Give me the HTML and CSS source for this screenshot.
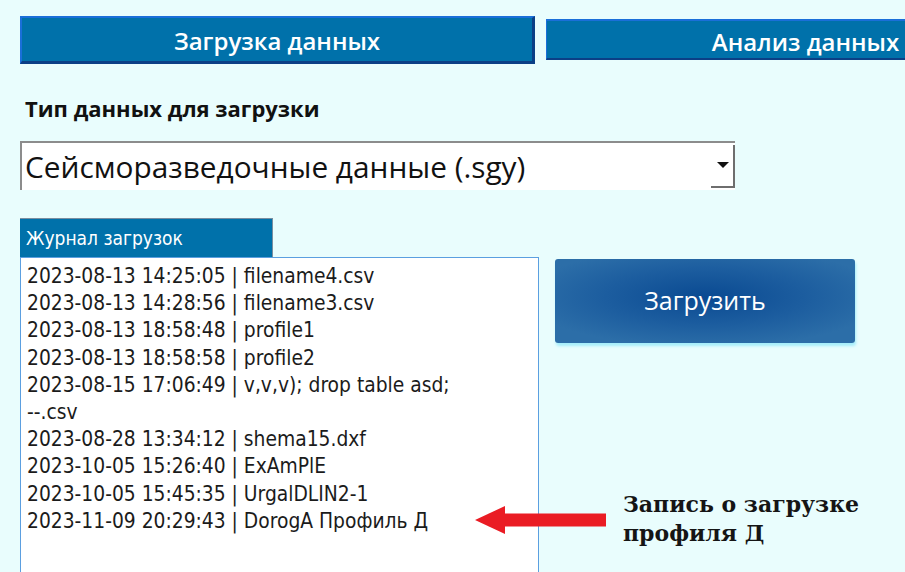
FILE: index.html
```html
<!DOCTYPE html>
<html lang="ru">
<head>
<meta charset="utf-8">
<title>Загрузка данных</title>
<link rel="stylesheet" href="styles.css">
</head>
<body>
<div class="page">
  <nav class="tabs">
    <div class="tab tab-active">Загрузка данных</div>
    <div class="tab tab-idle">Анализ данных</div>
  </nav>

  <div class="field-label">Тип данных для загрузки</div>

  <div class="select">
    <span class="select-value">Сейсморазведочные данные (.sgy)</span>
    <span class="select-btn"><span class="caret"></span></span>
  </div>

  <section class="lower">
    <div class="journal">
      <div class="journal-tab">Журнал загрузок</div>
      <div class="journal-list">
        <div class="row">2023-08-13 14:25:05 | filename4.csv</div>
        <div class="row">2023-08-13 14:28:56 | filename3.csv</div>
        <div class="row">2023-08-13 18:58:48 | profile1</div>
        <div class="row">2023-08-13 18:58:58 | profile2</div>
        <div class="row">2023-08-15 17:06:49 | v,v,v); drop table asd;<br>--.csv</div>
        <div class="row">2023-08-28 13:34:12 | shema15.dxf</div>
        <div class="row">2023-10-05 15:26:40 | ExAmPlE</div>
        <div class="row">2023-10-05 15:45:35 | UrgalDLIN2-1</div>
        <div class="row">2023-11-09 20:29:43 | DorogA Профиль Д</div>
      </div>
    </div>
    <div class="actions">
      <button class="upload-btn" type="button">Загрузить</button>
    </div>
  </section>

  <svg class="callout-arrow" width="132" height="30" viewBox="0 0 132 30">
    <polygon points="0,15 30,1 30,8.5 131,8.5 131,21.5 30,21.5 30,29" fill="#ea1c24"/>
  </svg>
  <div class="callout-text">Запись о загрузке<br>профиля Д</div>
</div>
</body>
</html>
```

FILE: styles.css
```css
html, body {
  margin: 0;
  padding: 0;
}

body {
  background: #e9fdfd;
  width: 905px;
  height: 572px;
  overflow: hidden;
}

.page {
  position: relative;
  width: 905px;
  height: 572px;
  overflow: hidden;
  padding-left: 20px;
  box-sizing: border-box;
}

/* top tab strip */
.tabs {
  display: flex;
  align-items: flex-start;
  gap: 11px;
  padding-top: 16px;
}

.tab {
  flex-shrink: 0;
  box-sizing: border-box;
  background: #0071aa;
  color: #fff;
  font-family: "Open Sans", sans-serif;
  font-size: 24px;
  font-weight: 600;
  display: flex;
  align-items: center;
  justify-content: center;
}

.tab-active {
  width: 515px;
  height: 48px;
  border-top: 2px solid #1a6fd9;
  border-left: 2px solid #1a6fd9;
  border-right: 3px solid #0b3f86;
  border-bottom: 3px solid #0b3f86;
  padding-top: 2px;
}

.tab-idle {
  width: 518px;
  height: 41px;
  margin-top: 3px;
  border-top: 2px solid #1a6fd9;
  border-left: 1px solid #1a6fd9;
  border-bottom: 2px solid #0b3f86;
  padding-top: 3px;
}

.field-label {
  margin-top: 31px;
  padding-left: 5px;
  font-family: "Open Sans", sans-serif;
  font-weight: 700;
  font-size: 22px;
  line-height: 26px;
  color: #111;
}

/* drop-down field */
.select {
  margin-top: 20px;
  width: 715px;
  height: 49px;
  box-sizing: border-box;
  background: #fff;
  border-top: 2px solid #8c8c8c;
  border-left: 2px solid #8c8c8c;
  display: flex;
  align-items: center;
  justify-content: space-between;
}

.select-value {
  padding-left: 3px;
  padding-bottom: 1px;
  font-family: "Open Sans", sans-serif;
  font-size: 29.8px;
  color: #111;
}

.select-btn {
  align-self: flex-end;
  width: 24px;
  height: 43px;
  margin-bottom: 2px;
  box-sizing: border-box;
  border-right: 2px solid #6e6e6e;
  border-bottom: 2px solid #6e6e6e;
  display: flex;
  align-items: center;
  justify-content: center;
}

.caret {
  width: 0;
  height: 0;
  margin-left: 1px;
  margin-bottom: 2px;
  border-left: 6px solid transparent;
  border-right: 6px solid transparent;
  border-top: 6px solid #111;
}

/* journal + action button */
.lower {
  display: flex;
  gap: 16px;
  margin-top: 28px;
}

.journal {
  width: 519px;
}

.journal-tab {
  width: 253px;
  height: 39px;
  box-sizing: border-box;
  background: #0071aa;
  border-top: 1px solid #7a8ea0;
  border-right: 1px solid #7a8ea0;
  color: #fff;
  font-family: "DejaVu Sans Condensed", "DejaVu Sans", sans-serif;
  font-size: 19px;
  line-height: 38px;
  padding-left: 6px;
}

.journal-list {
  height: 340px;
  box-sizing: border-box;
  background: #fff;
  border: 1px solid #5b9fe0;
  padding: 5px 0 0 6px;
  font-family: "DejaVu Sans Condensed", "DejaVu Sans", sans-serif;
  font-size: 20.8px;
  line-height: 27.2px;
  color: #1b1b1b;
}

.actions {
  padding-top: 41px;
}

.upload-btn {
  width: 300px;
  height: 84px;
  border: none;
  border-radius: 3px;
  background: radial-gradient(ellipse 60% 60% at 50% 45%, #0a4a92 0%, #1c5d9f 55%, #2c6ea8 100%);
  box-shadow: 1px 3px 3px #a5eefb;
  color: #fff;
  font-family: "Open Sans", sans-serif;
  font-size: 25px;
  padding: 0 0 2px;
  cursor: pointer;
}

/* annotation overlay */
.callout-arrow {
  position: absolute;
  left: 475px;
  top: 505px;
}

.callout-text {
  position: absolute;
  left: 623px;
  top: 490px;
  font-family: "DejaVu Serif", serif;
  font-weight: 700;
  font-size: 22px;
  line-height: 29px;
  color: #151515;
}
```
